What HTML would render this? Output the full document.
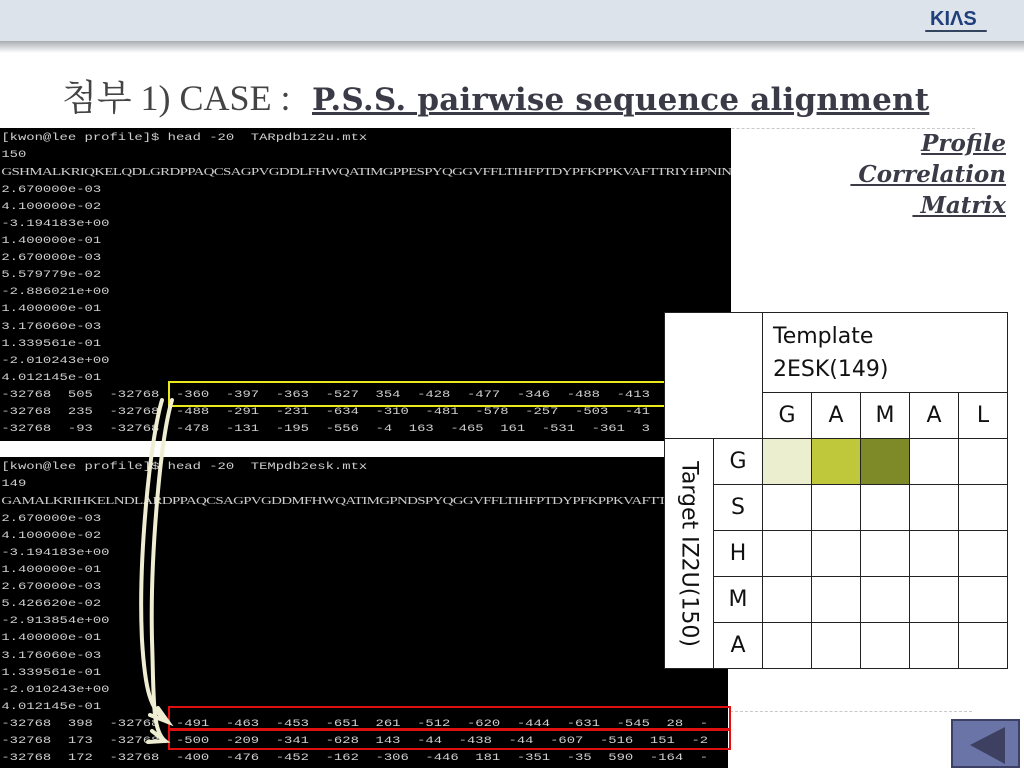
<!DOCTYPE html>
<html><head><meta charset="utf-8"><style>
*{margin:0;padding:0;box-sizing:border-box}
body{width:1024px;height:768px;overflow:hidden;background:#fff;position:relative;font-family:"Liberation Sans",sans-serif}
.hdr{position:absolute;left:0;top:0;width:1024px;height:41px;background:#dde3ea}
.shd{position:absolute;left:0;top:41px;width:1024px;height:12px;background:linear-gradient(#a9adb2,#fff)}
.kias{position:absolute;left:930px;top:8px;font:bold 20px "Liberation Sans",sans-serif;color:#1f3f7a;letter-spacing:0px}
.kul{position:absolute;left:925px;top:30px;width:62px;height:2px;background:#33445e;border-radius:1px}
.title{position:absolute;left:62px;top:70px;white-space:nowrap;color:#444;height:44px}
.title .n{font-family:"Liberation Serif","Noto Serif CJK SC",serif;font-size:36px;display:inline-block;width:250px;vertical-align:baseline}
.title .b{font-family:"DejaVu Serif",serif;font-weight:bold;font-size:31px;text-decoration:underline;color:#3b3b48;letter-spacing:.2px}
.dash{position:absolute;border-top:1px dashed #c8c8c8;height:0}
.term{position:absolute;background:#000;overflow:hidden}
.term pre{font:10.2px/17.05px "Liberation Mono",monospace;color:#cfcfcf;padding:2px 0 0 1px;white-space:pre;transform:scaleX(1.36);transform-origin:left top}
.term .sq{font-family:"Liberation Serif",serif;font-size:11px;letter-spacing:-.5px}
.side{position:absolute;right:18px;top:128px;text-align:right;font:italic bold 23px/31px "DejaVu Serif",serif;color:#3b3b48;text-decoration:underline;white-space:pre}
table{position:absolute;left:664px;top:312px;border-collapse:collapse;background:#fff;font-family:"DejaVu Sans",sans-serif;color:#111}
td{border:1.5px solid #222;width:49px;height:46px;text-align:center;font-size:22px;padding:0}
.box{position:absolute;border:2px solid}
</style></head><body>
<div class="hdr"></div><div class="shd"></div>
<div class="kias">KIΛS</div><div class="kul"></div>
<div class="title"><span class="n">첨부 1) CASE : </span><span class="b">P.S.S. pairwise sequence alignment</span></div>
<div class="dash" style="left:5px;top:128px;width:970px"></div>
<div class="dash" style="left:730px;top:711px;width:242px"></div>
<div class="term" style="left:0;top:128px;width:731px;height:313px"><pre>[kwon@lee profile]$ head -20  TARpdb1z2u.mtx
150
<span class="sq">GSHMALKRIQKELQDLGRDPPAQCSAGPVGDDLFHWQATIMGPPESPYQGGVFFLTIHFPTDYPFKPPKVAFTTRIYHPNINSNGS</span>
2.670000e-03
4.100000e-02
-3.194183e+00
1.400000e-01
2.670000e-03
5.579779e-02
-2.886021e+00
1.400000e-01
3.176060e-03
1.339561e-01
-2.010243e+00
4.012145e-01
-32768  505  -32768  -360  -397  -363  -527  354  -428  -477  -346  -488  -413
-32768  235  -32768  -488  -291  -231  -634  -310  -481  -578  -257  -503  -41
-32768  -93  -32768  -478  -131  -195  -556  -4  163  -465  161  -531  -361  3</pre></div>
<div class="box" style="left:168px;top:381px;width:500px;height:26px;border-color:#e8e81a;border-right:none"></div>
<div class="term" style="left:0;top:457px;width:728px;height:311px"><pre>[kwon@lee profile]$ head -20  TEMpdb2esk.mtx
149
<span class="sq">GAMALKRIHKELNDLARDPPAQCSAGPVGDDMFHWQATIMGPNDSPYQGGVFFLTIHFPTDYPFKPPKVAFTTRIYHPNINSNGS</span>
2.670000e-03
4.100000e-02
-3.194183e+00
1.400000e-01
2.670000e-03
5.426620e-02
-2.913854e+00
1.400000e-01
3.176060e-03
1.339561e-01
-2.010243e+00
4.012145e-01
-32768  398  -32768  -491  -463  -453  -651  261  -512  -620  -444  -631  -545  28  -
-32768  173  -32768  -500  -209  -341  -628  143  -44  -438  -44  -607  -516  151  -2
-32768  172  -32768  -400  -476  -452  -162  -306  -446  181  -351  -35  590  -164  -</pre></div>
<div class="box" style="left:168px;top:706px;width:563px;height:24px;border-color:#e01010"></div>
<div class="box" style="left:168px;top:729px;width:563px;height:21px;border-color:#e01010"></div>
<svg style="position:absolute;left:0;top:0" width="1024" height="768">
<g fill="none" stroke="#efeed2" stroke-width="4" stroke-linecap="round">
<path d="M162 400 C150 440 138 560 142 640 C145 690 150 710 168 722"/>
<path d="M172 400 C160 440 150 560 152 640 C154 700 152 730 165 741"/>
<path d="M150 715 L168 722 L158 708"/>
<path d="M148 742 L165 741 L152 731"/>
</g></svg>
<div class="side">Profile
 Correlation
 Matrix</div>
<table>
<tr><td colspan="2" rowspan="2"></td><td colspan="5" style="height:80px;text-align:left;padding-left:10px;font-size:22px;line-height:33px">Template<br>2ESK(149)</td></tr>
<tr><td>G</td><td>A</td><td>M</td><td>A</td><td>L</td></tr>
<tr><td rowspan="5" style="position:relative"><div style="position:absolute;left:50%;top:50%;transform:translate(-50%,-50%) rotate(90deg);white-space:nowrap;font-size:22px">Target IZ2U(150)</div></td><td>G</td><td style="background:#ebefcf"></td><td style="background:#bfc83b"></td><td style="background:#7e8a27"></td><td></td><td></td></tr>
<tr><td>S</td><td></td><td></td><td></td><td></td><td></td></tr>
<tr><td>H</td><td></td><td></td><td></td><td></td><td></td></tr>
<tr><td>M</td><td></td><td></td><td></td><td></td><td></td></tr>
<tr><td>A</td><td></td><td></td><td></td><td></td><td></td></tr>
</table>
<div style="position:absolute;left:951px;top:719px;width:69px;height:49px;background:#6b74a6;border:2px solid #3c4064"></div>
<svg style="position:absolute;left:968px;top:724px" width="40" height="42"><polygon points="37,3 37,40 2,21" fill="#3e4062"/></svg>
</body></html>
